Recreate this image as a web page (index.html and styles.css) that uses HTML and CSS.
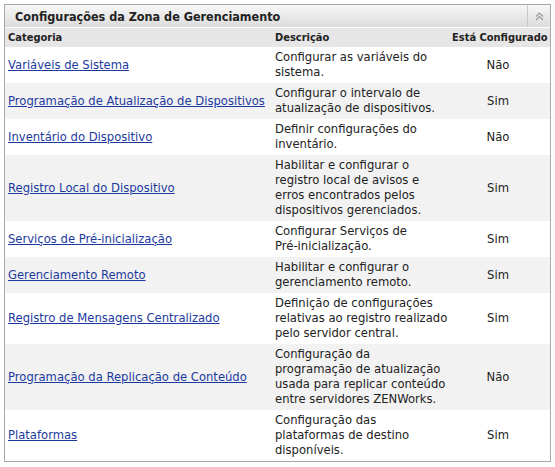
FILE: index.html
```html
<!DOCTYPE html>
<html lang="pt">
<head>
<meta charset="utf-8">
<link rel="stylesheet" href="styles.css">
</head>
<body>
<div class="panel">
  <div class="panel-title">
    <span class="title-text">Configurações da Zona de Gerenciamento</span>
    <span class="collapse">
      <svg width="9" height="9" viewBox="0 0 9 9"><path d="M1 4.5 L4.5 1 L8 4.5 M1 8 L4.5 4.5 L8 8" fill="none" stroke="#9a9a9a" stroke-width="1.2"/></svg>
    </span>
  </div>
  <table class="grid">
    <colgroup><col class="c1"><col class="c2"><col class="c3"></colgroup>
    <thead>
      <tr><th>Categoria</th><th>Descrição</th><th class="center">Está Configurado</th></tr>
    </thead>
    <tbody>
      <tr><td><a href="#">Variáveis de Sistema</a></td><td>Configurar as variáveis do sistema.</td><td class="center">Não</td></tr>
      <tr class="alt"><td><a href="#">Programação de Atualização de Dispositivos</a></td><td>Configurar o intervalo de atualização de dispositivos.</td><td class="center">Sim</td></tr>
      <tr><td><a href="#">Inventário do Dispositivo</a></td><td>Definir configurações do inventário.</td><td class="center">Não</td></tr>
      <tr class="alt"><td><a href="#">Registro Local do Dispositivo</a></td><td>Habilitar e configurar o registro local de avisos e erros encontrados pelos dispositivos gerenciados.</td><td class="center">Sim</td></tr>
      <tr><td><a href="#">Serviços de Pré-inicialização</a></td><td>Configurar Serviços de <span class="nobr">Pré-inicialização.</span></td><td class="center">Sim</td></tr>
      <tr class="alt"><td><a href="#">Gerenciamento Remoto</a></td><td>Habilitar e configurar o gerenciamento remoto.</td><td class="center">Sim</td></tr>
      <tr><td><a href="#">Registro de Mensagens Centralizado</a></td><td>Definição de configurações relativas ao registro realizado pelo servidor central.</td><td class="center">Sim</td></tr>
      <tr class="alt"><td><a href="#">Programação da Replicação de Conteúdo</a></td><td>Configuração da<br>programação de atualização usada para replicar conteúdo entre servidores ZENWorks.</td><td class="center">Não</td></tr>
      <tr><td><a href="#">Plataformas</a></td><td>Configuração das<br>plataformas de destino disponíveis.</td><td class="center">Sim</td></tr>
    </tbody>
  </table>
</div>
</body>
</html>
```
FILE: styles.css
```css
html, body { margin: 0; padding: 0; background: #fff; }
body { padding: 4px; font-family: "DejaVu Sans", Verdana, sans-serif; color: #222; }
.panel { width: 545px; border: 1px solid #a8a8a8; }
.panel-title {
  display: flex; align-items: center; height: 22px;
  background: linear-gradient(#f7f7f7, #dcdcdc);
  border-bottom: 1px solid #fff;
}
.title-text {
  flex: 1; padding-left: 10px; font-weight: bold; font-size: 12.5px; color: #222;
  font-family: "DejaVu Sans Condensed", "DejaVu Sans", sans-serif;
}
.collapse {
  width: 22px; height: 22px; display: flex; align-items: center; justify-content: center;
  border-left: 1px solid #c8c8c8;
}
.collapse svg { display: block; }
.grid { width: 100%; border-collapse: collapse; table-layout: fixed; font-size: 11.6px; }
.c1 { width: 267px; }
.c2 { width: 180px; }
.grid th {
  background: #e6e6e6; font-weight: bold; font-size: 11px; text-align: left;
  padding: 3px; height: 13px; line-height: 13px; color: #222; white-space: nowrap;
  font-family: "DejaVu Sans Condensed", "DejaVu Sans", sans-serif;
}
.grid td { padding: 3px; line-height: 15px; vertical-align: middle; }
.grid td:nth-child(2) { padding-right: 0; }
.grid td:nth-child(3) { padding-right: 6px; padding-left: 0; }
.grid tr.alt td { background: #f2f2f2; }
.center { text-align: center; }
.grid th.center { text-align: center; padding-right: 4px; padding-left: 0; }
.nobr { white-space: nowrap; }
.grid a { color: #1c3a9e; text-decoration: underline; }
```
